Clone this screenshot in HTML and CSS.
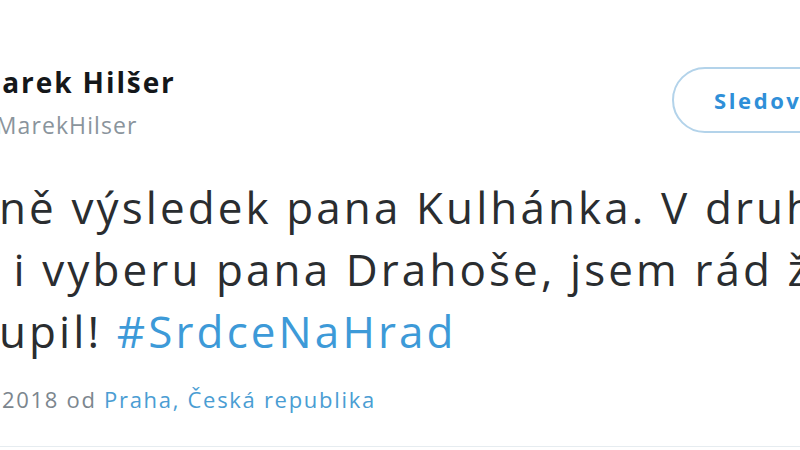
FILE: index.html
```html
<!DOCTYPE html>
<html lang="cs">
<head>
  <meta charset="UTF-8">
  <meta name="viewport" content="width=device-width, initial-scale=1.0">
  <title>Marek Hilšer – tweet</title>
  <link rel="stylesheet" href="styles.css">
</head>
<body>
  <div class="tweet">
    <div class="tweet-header">
      <div class="tweet-user">
        <span class="tweet-user-name">Marek Hilšer</span>
        <span class="tweet-user-handle">@MarekHilser</span>
      </div>
      <button class="follow-btn">Sledovat</button>
    </div>

    <p class="tweet-text">
      ně výsledek pana Kulhánka. V druhém<br>
      &nbsp;i vyberu pana Drahoše, jsem rád že<br>
      upil! <a href="#" class="hashtag">#SrdceNaHrad</a>
    </p>

    <div class="tweet-meta">
      2018 od <a href="#" class="place">Praha, Česká republika</a>
    </div>
  </div>
</body>
</html>
```

FILE: styles.css
```css
* { margin: 0; padding: 0; box-sizing: border-box; }

html,
body { width: 100%; height: 100%; }

body {
  background: #fff;
  overflow: hidden;
  font-family: "Open Sans", "Noto Sans", sans-serif;
}

.tweet {
  width: 896px;
  margin-left: -24px;
  padding-top: 64px;
  border-bottom: 1px solid #e6ecf0;
  height: 447px;
}

.tweet-header {
  display: flex;
  align-items: flex-start;
  justify-content: space-between;
}
.tweet-user {
  display: flex;
  flex-direction: column;
  margin-left: -2px;
}
.tweet-user-name {
  font-size: 28px;
  line-height: 36px;
  font-weight: 700;
  letter-spacing: 1.9px;
  color: #14171a;
}
.tweet-user-handle {
  margin-top: 8px;
  font-size: 23px;
  line-height: 34px;
  letter-spacing: 1.1px;
  color: #8a949c;
}

.follow-btn {
  width: 200px;
  height: 66px;
  margin-top: 3px;
  border: 2px solid #b3d3ea;
  border-radius: 33px;
  background: #fff;
  color: #2f8fd8;
  font-family: inherit;
  font-size: 22px;
  font-weight: 700;
  letter-spacing: 2.6px;
  text-align: left;
  padding-left: 40px;
}

.tweet-text {
  margin-top: 34px;
  padding-left: 23px;
  font-size: 44px;
  line-height: 62px;
  letter-spacing: 3.1px;
  color: #2a2d30;
  white-space: nowrap;
}
.hashtag {
  color: #3d9ad8;
  text-decoration: none;
}

.tweet-meta {
  margin-top: 22px;
  padding-left: 26px;
  font-size: 22px;
  letter-spacing: 1.7px;
  color: #7c868e;
}
.place {
  color: #4a9dd3;
  text-decoration: none;
}
```
